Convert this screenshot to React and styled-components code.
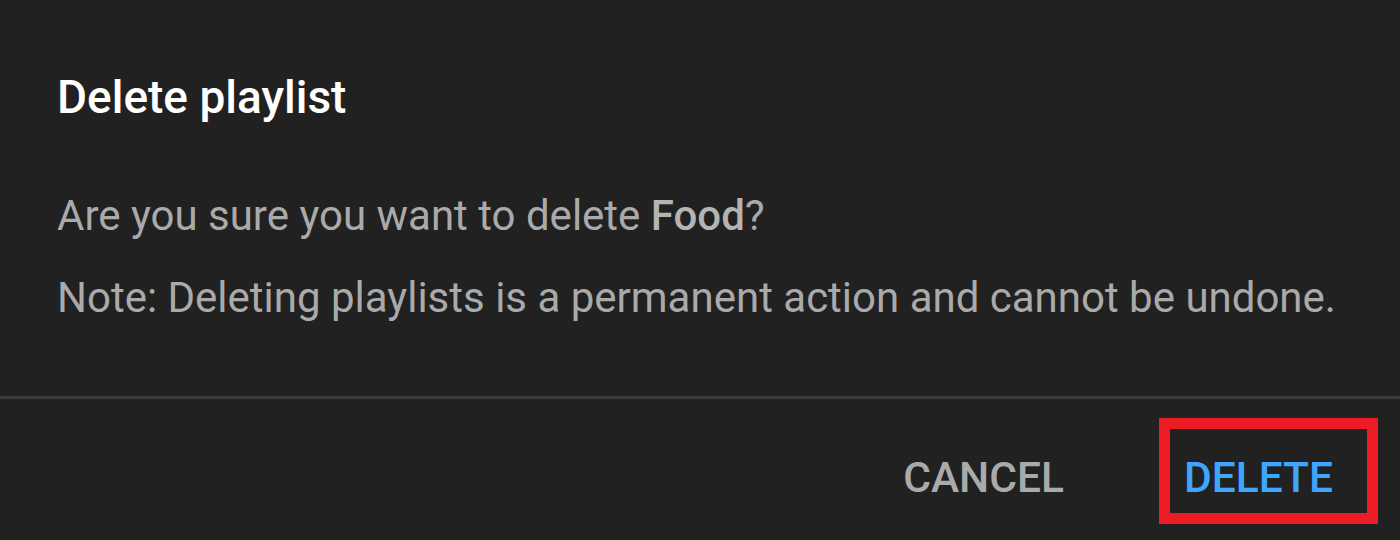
import React from "react";
import styled, { createGlobalStyle } from "styled-components";

const GlobalStyle = createGlobalStyle`
  html, body {
    margin: 0;
    padding: 0;
    background: #212121;
  }
  body {
    font-family: Roboto, "Noto Sans", Arial, sans-serif;
  }
`;

// Whole dialog fills the window
const Dialog = styled.div`
  width: 1400px;
  height: 540px;
  background: #212121;
  display: flex;
  flex-direction: column;
  overflow: hidden;
`;

const Body = styled.div`
  padding: 67px 0 0 57px;
  height: 396px;
  flex-shrink: 0;
  box-sizing: border-box;
`;

const Title = styled.h2`
  margin: 0 0 59px;
  font-size: 46px;
  font-weight: 500;
  line-height: 60px;
  color: #fff;
`;

const Text = styled.p`
  margin: 0 0 22px;
  font-size: 42px;
  line-height: 60px;
  color: #aaa;

  b {
    font-weight: 500;
    color: #b4b4b4;
  }
`;

const Divider = styled.div`
  height: 3px;
  flex-shrink: 0;
  background: #3a3a3a;
`;

const Actions = styled.div`
  display: flex;
  justify-content: flex-end;
  align-items: center;
  gap: 50px;
  padding: 19px 22px 0 0;
`;

const Button = styled.button`
  background: none;
  font-family: inherit;
  font-size: 42.5px;
  font-weight: 500;
  line-height: 70px;
  color: ${(p) => (p.$primary ? "#3ea6ff" : "#aaa")};
  border: 11px solid ${(p) => (p.$marked ? "#ed1c24" : "transparent")};
  padding: 14px 34px 0 14px;
  margin: 0;
  cursor: pointer;
`;

export default function App() {
  return (
    <>
      <GlobalStyle />
      <Dialog>
        <Body>
          <Title>Delete playlist</Title>
          <Text>
            Are you sure you want to delete <b>Food</b>?
          </Text>
          <Text>Note: Deleting playlists is a permanent action and cannot be undone.</Text>
        </Body>
        <Divider />
        <Actions>
          <Button>CANCEL</Button>
          <Button $primary $marked>
            DELETE
          </Button>
        </Actions>
      </Dialog>
    </>
  );
}
